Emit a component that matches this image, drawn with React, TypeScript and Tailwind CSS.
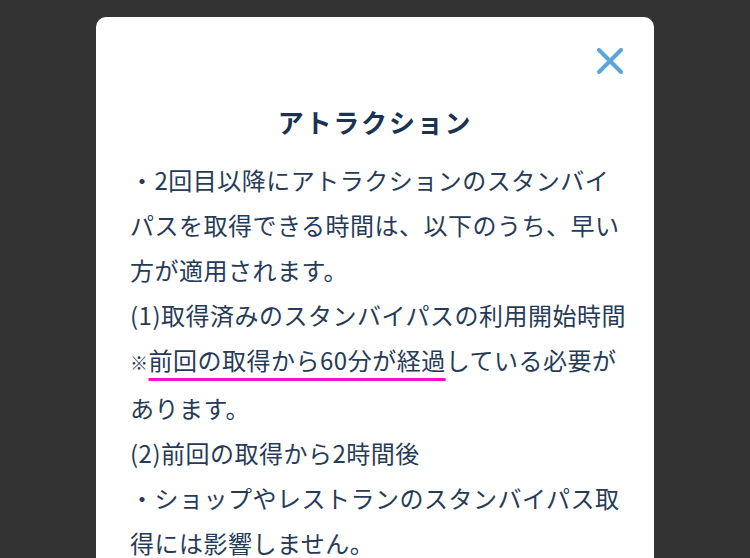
const CloseIcon = () => (
  <svg width="26" height="26" viewBox="0 0 26 26" fill="none">
    <path
      d="M2 2L24 24M24 2L2 24"
      stroke="#5aa6da"
      strokeWidth="4"
      strokeLinecap="round"
    />
  </svg>
);

const App: React.FC = () => {
  return (
    <div
      className="h-[558px] w-[750px] overflow-hidden bg-[#333333] pt-[17px]"
      style={{ fontFamily: '"Noto Sans CJK JP", "Noto Sans", sans-serif' }}
    >
      <section className="mx-auto h-[600px] w-[558px] rounded-[10px] bg-white">
        <div className="flex justify-end pr-[31px] pt-[31px]">
          <button aria-label="close">
            <CloseIcon />
          </button>
        </div>
        <h2 className="mt-[28px] text-center text-[26px] font-bold leading-[40px] tracking-[0.07em] text-[#1c3253]">
          アトラクション
        </h2>
        <div className="mt-[15px] whitespace-nowrap px-[34px] text-[24px] leading-[45px] tracking-[0.5px] text-[#263b58]">
          <p>
            ・2回目以降にアトラクションのスタンバイ
            <br />
            パスを取得できる時間は、以下のうち、早い
            <br />
            方が適用されます。
          </p>
          <p>(1)取得済みのスタンバイパスの利用開始時間</p>
          <p>
            <span className="text-[18px] font-bold">※</span>
            <span className="underline decoration-[#ff10c8] decoration-[3px] underline-offset-[8px]">
              前回の取得から60分が経過
            </span>
            している必要が
            <br />
            あります。
          </p>
          <p>(2)前回の取得から2時間後</p>
          <p>
            ・ショップやレストランのスタンバイパス取
            <br />
            得には影響しません。
          </p>
        </div>
      </section>
    </div>
  );
};

export default App;
